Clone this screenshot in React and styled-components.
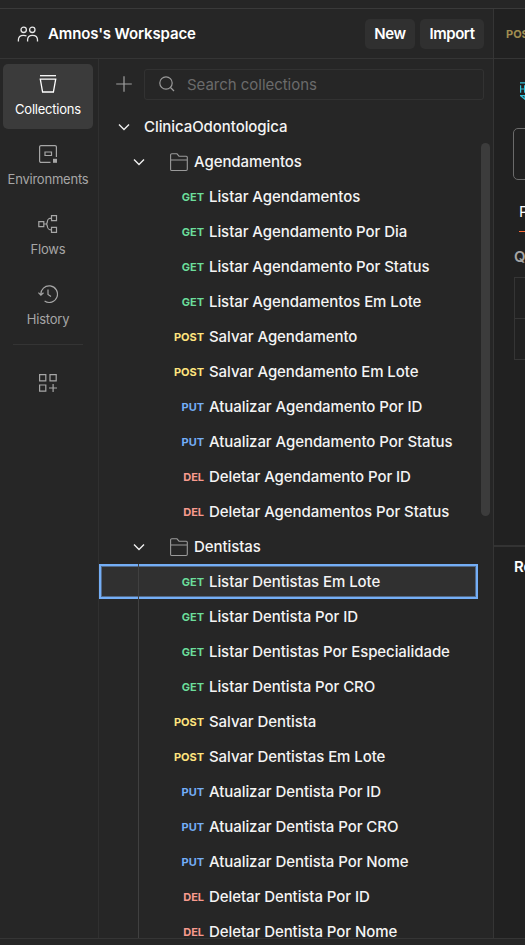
import React from "react";
import styled, { createGlobalStyle } from "styled-components";

const GlobalStyle = createGlobalStyle`
  *, *::before, *::after { box-sizing: border-box; }
  body { margin: 0; background: #262626; overflow: hidden; }
`;

const Shell = styled.div`
  width: 525px;
  height: 945px;
  display: flex;
  flex-direction: column;
  overflow: hidden;
  background: #262626;
  color: #fff;
  font-family: Inter, "Liberation Sans", sans-serif;
  font-size: 15px;
  white-space: nowrap;
`;
const TopStrip = styled.div`
  height: 9px;
  flex: none;
  border-bottom: 1px solid #3a3a3a;
`;
const Main = styled.div`
  flex: 1;
  min-height: 0;
  display: grid;
  grid-template-columns: 494px 1fr;
`;
const StatusBar = styled.div`
  height: 7px;
  flex: none;
  border-top: 1px solid #353535;
`;
const Workspace = styled.section`
  display: flex;
  flex-direction: column;
  min-height: 0;
  border-right: 1px solid #353535;
`;
const Header = styled.header`
  height: 50px;
  flex: none;
  display: flex;
  align-items: center;
  gap: 5px;
  padding: 0 9px 0 17px;
  border-bottom: 1px solid #353535;
`;
const Title = styled.h1`
  flex: 1;
  margin: 0 0 0 4px;
  font-size: 15px;
  line-height: 20px;
  font-weight: 600;
  letter-spacing: -0.14px;
`;
const HeaderButton = styled.button`
  width: ${(p) => p.$width}px;
  height: 30px;
  padding: 0;
  border: 0;
  border-radius: 5px;
  background: #303030;
  color: #fff;
  font: 600 15px Inter, sans-serif;
  letter-spacing: -0.45px;
`;
const Body = styled.div`
  flex: 1;
  min-height: 0;
  display: flex;
`;
const Rail = styled.nav`
  width: 99px;
  flex: none;
  display: flex;
  flex-direction: column;
  align-items: center;
  gap: 5px;
  padding: 5px 2px 0 0;
  border-right: 1px solid #303030;
`;
const RailItem = styled.div`
  width: 90px;
  height: 65px;
  display: flex;
  flex-direction: column;
  align-items: center;
  padding-top: 10px;
  gap: 5px;
  border-radius: 5px;
  background: ${(p) => (p.$active ? "#3b3b3b" : "transparent")};
  color: ${(p) => (p.$active ? "#fff" : "#a6a6a6")};
  font-size: 13px;
  line-height: 20px;
  letter-spacing: -0.22px;
`;
const RailDivider = styled.div`
  width: 70px;
  height: 1px;
  flex: none;
  background: #343434;
`;
const RailExtra = styled.div`
  height: 40px;
  margin-top: 13px;
  display: grid;
  place-items: center;
  color: #a6a6a6;
`;
const Explorer = styled.div`
  flex: 1;
  min-width: 0;
  display: flex;
  flex-direction: column;
`;
const Tools = styled.div`
  height: 50px;
  flex: none;
  display: flex;
  align-items: center;
  gap: 10px;
  padding: 0 9px 0 15px;
`;
const Search = styled.div`
  flex: 1;
  height: 31px;
  display: flex;
  align-items: center;
  gap: 10px;
  padding-left: 12px;
  border: 1px solid #323232;
  border-radius: 3px;
  color: #6b6b6b;
  letter-spacing: -0.03px;
`;
const TreeArea = styled.div`
  flex: 1;
  min-height: 0;
  display: grid;
  grid-template-columns: 379px 1fr;
  overflow: hidden;
`;
const Tree = styled.div`
  min-height: 0;
`;
const Row = styled.div`
  height: 35px;
  display: flex;
  align-items: center;
  color: #f4f4f4;
  font-weight: 450;
  letter-spacing: -0.07px;
  line-height: 20px;
  padding-left: ${(p) => p.$indent || 0}px;
`;
const Spacer = styled.span`
  width: ${(p) => p.$width}px;
  flex: none;
`;
const Requests = styled.div`
  position: relative;
  &::before {
    content: "";
    display: ${(p) => (p.$guide ? "block" : "none")};
    position: absolute;
    left: 39px;
    top: 0;
    bottom: 0;
    width: 1px;
    background: #404040;
    z-index: 1;
  }
`;
const RequestRow = styled(Row)`
  gap: 5px;
  background: ${(p) => (p.$selected ? "#303030" : "transparent")};
  box-shadow: ${(p) => (p.$selected ? "inset 0 0 0 2px #74aef6, inset 0 0 0 3px #526a8a" : "none")};
`;
const methodColors = { GET: "#6bdd9a", POST: "#ffe47e", PUT: "#74aef6", DEL: "#f79a8e" };
const Method = styled.span`
  width: 105px;
  flex: none;
  text-align: right;
  font-size: 11px;
  font-weight: 700;
  letter-spacing: -0.03px;
  color: ${(p) => methodColors[p.$method]};
`;
const ScrollTrack = styled.div`
  padding: 34px 0 0 3px;
`;
const ScrollThumb = styled.div`
  width: 9px;
  height: 373px;
  border-radius: 5px;
  background: #3c3c3c;
`;
const Editor = styled.section`
  min-width: 0;
  overflow: hidden;
  display: flex;
  flex-direction: column;
  background: #212121;
`;
const EditorTab = styled.div`
  height: 50px;
  flex: none;
  padding-left: 12px;
  border-bottom: 1px solid #353535;
  color: #a08d50;
  font-size: 11px;
  font-weight: 700;
  line-height: 50px;
`;
const Request = styled.div`
  height: 486px;
  flex: none;
  display: flex;
  flex-direction: column;
  align-items: flex-start;
`;
const ProtocolIcon = styled.div`
  margin: 23px 0 0 25px;
  height: 46px;
`;
const UrlBox = styled.div`
  width: 200px;
  height: 52px;
  margin-left: 19px;
  border: 1px solid #6b6b6b;
  border-radius: 5px;
`;
const ParamTab = styled.div`
  height: 52px;
  padding-top: 22px;
  margin-left: 25px;
  line-height: 20px;
  border-bottom: 1px solid #ff6c37;
`;
const QueryLabel = styled.div`
  margin: 15px 0 0 20px;
  height: 30px;
  line-height: 20px;
  color: #a6a6a6;
  font-weight: 600;
`;
const ParamTable = styled.div`
  width: 200px;
  height: 83px;
  margin-left: 20px;
  border: 1px solid #353535;
  display: grid;
  grid-template-rows: 41px 1fr;
`;
const ParamCell = styled.div`
  border-bottom: ${(p) => (p.$last ? "0" : "1px solid #353535")};
`;
const Response = styled.div`
  flex: 1;
  border-top: 2px solid #333;
  padding: 10px 0 0 20px;
  font-weight: 600;
  line-height: 20px;
`;

const Icon = ({ size = 20, children, sw = 1.2 }) => (
  <svg width={size} height={size} viewBox={`0 0 ${size} ${size}`} fill="none" stroke="currentColor" strokeWidth={sw}>
    {children}
  </svg>
);
const PeopleIcon = () => (
  <svg width="22" height="20" viewBox="0 0 22 20" fill="none" stroke="#e6e6e6" strokeWidth="1.3">
    <circle cx="6.7" cy="5.8" r="2.7" />
    <circle cx="15.3" cy="5.8" r="2.7" />
    <path d="M1.4 17.6v-1.8C1.4 13 3.5 11.3 6.5 11.3c1.2 0 2.2.2 3 .7M10.6 17.6v-1.8c0-2.8 2-4.5 4.9-4.5s5 1.7 5 4.5v1.8" />
  </svg>
);
const CollectionsIcon = () => (
  <Icon sw={1.3}><path d="M2 1.7h16" /><path d="M1.6 5.2h16.8M2.3 5.2l2.3 12.8h10.8l2.3-12.8" /></Icon>
);
const EnvironmentsIcon = () => (
  <Icon>
    <path d="M12.5 18.4H3a1.4 1.4 0 0 1-1.4-1.4V3A1.4 1.4 0 0 1 3 1.6h14A1.4 1.4 0 0 1 18.4 3v10" />
    <path d="M7 8h6.5v3.5H7z" />
    <path d="M15 14.8h4v4h-4z" fill="currentColor" stroke="none" />
  </Icon>
);
const FlowsIcon = () => (
  <Icon>
    <path d="M.8 7.6h5v5h-5zM13.5 1.6h5v5h-5zM13.5 13.4h5v5h-5zM5.8 10h3M13.5 4.1C9.7 4.1 9.6 6 9.3 8L8.6 10l.7 2c.3 2 .4 3.9 4.2 3.9" />
  </Icon>
);
const HistoryIcon = () => (
  <Icon>
    <path d="M2.9 10.9a8.3 8.3 0 1 1 3.7 6.2M.4 8.6l2.5 2.5L5.5 8.7M10 5.4v5l3 2" />
  </Icon>
);
const AppsIcon = () => (
  <Icon><path d="M1.6 1.6h6.2v6.2H1.6zM12 1.6h6.2v6.2H12zM1.6 12h6.2v6.2H1.6zM15.1 11v8M11 15h8" /></Icon>
);
const PlusIcon = () => (
  <svg width="20" height="20" viewBox="0 0 20 20" stroke="#a0a0a0" strokeWidth="1.2"><path d="M10 2.2v15.6M2.2 10h15.6" /></svg>
);
const SearchIcon = () => (
  <svg width="20" height="20" viewBox="0 0 20 20" fill="none" stroke="#9a9a9a" strokeWidth="1.2">
    <circle cx="9" cy="9" r="6.2" /><path d="M13.5 13.5 17 17" />
  </svg>
);
const Chevron = () => (
  <svg width="12" height="8" viewBox="0 0 12 8" fill="none" stroke="#f0f0f0" strokeWidth="1.4"><path d="M1 1.5 6 6.4 11 1.5" /></svg>
);
const FolderIcon = () => (
  <Icon sw={1.1}><path d="M1.6 17.5V3A1.2 1.2 0 0 1 2.8 1.8H8l2 2.4h7.3a1 1 0 0 1 1 1v12.1a1.2 1.2 0 0 1-1.2 1.2H2.7a1.1 1.1 0 0 1-1.1-1ZM1.6 8h16.7" stroke="#9a9a9a" /></Icon>
);
const HttpIcon = () => (
  <svg width="22" height="18" viewBox="0 0 22 18" fill="none" stroke="#35c4dc" strokeWidth="1.2">
    <path d="M1 .8h20M1.6 3.3v7.4M5.6 3.3v7.4M1.6 7h4M7.5 3.8h4M9.5 3.8v7M1 13.6h20M2 14l4 3.3V14" />
  </svg>
);

const agendamentos = [
  ["GET", "Listar Agendamentos"],
  ["GET", "Listar Agendamento Por Dia"],
  ["GET", "Listar Agendamento Por Status"],
  ["GET", "Listar Agendamentos Em Lote"],
  ["POST", "Salvar Agendamento"],
  ["POST", "Salvar Agendamento Em Lote"],
  ["PUT", "Atualizar Agendamento Por ID"],
  ["PUT", "Atualizar Agendamento Por Status"],
  ["DEL", "Deletar Agendamento Por ID"],
  ["DEL", "Deletar Agendamentos Por Status"],
];
const dentistas = [
  ["GET", "Listar Dentistas Em Lote"],
  ["GET", "Listar Dentista Por ID"],
  ["GET", "Listar Dentistas Por Especialidade"],
  ["GET", "Listar Dentista Por CRO"],
  ["POST", "Salvar Dentista"],
  ["POST", "Salvar Dentistas Em Lote"],
  ["PUT", "Atualizar Dentista Por ID"],
  ["PUT", "Atualizar Dentista Por CRO"],
  ["PUT", "Atualizar Dentista Por Nome"],
  ["DEL", "Deletar Dentista Por ID"],
  ["DEL", "Deletar Dentista Por Nome"],
];

const Folder = ({ name, items, selected, guide }) => (
  <>
    <Row $indent={34}>
      <Chevron />
      <Spacer $width={24} />
      <FolderIcon />
      <Spacer $width={5} />
      {name}
    </Row>
    <Requests $guide={guide}>
      {items.map(([method, label]) => (
        <RequestRow key={label} $selected={label === selected}>
          <Method $method={method}>{method}</Method>
          {label}
        </RequestRow>
      ))}
    </Requests>
  </>
);

export default function App() {
  return (
    <Shell>
      <GlobalStyle />
      <TopStrip />
      <Main>
        <Workspace>
          <Header>
            <PeopleIcon />
            <Title>Amnos's Workspace</Title>
            <HeaderButton $width={50}>New</HeaderButton>
            <HeaderButton $width={64}>Import</HeaderButton>
          </Header>
          <Body>
            <Rail>
              <RailItem $active><CollectionsIcon />Collections</RailItem>
              <RailItem><EnvironmentsIcon />Environments</RailItem>
              <RailItem><FlowsIcon />Flows</RailItem>
              <RailItem><HistoryIcon />History</RailItem>
              <RailDivider />
              <RailExtra><AppsIcon /></RailExtra>
            </Rail>
            <Explorer>
              <Tools>
                <PlusIcon />
                <Search><SearchIcon />Search collections</Search>
              </Tools>
              <TreeArea>
                <Tree>
                  <Row $indent={19}>
                    <Chevron />
                    <Spacer $width={14} />
                    ClinicaOdontologica
                  </Row>
                  <Folder name="Agendamentos" items={agendamentos} />
                  <Folder name="Dentistas" items={dentistas} selected="Listar Dentistas Em Lote" guide />
                </Tree>
                <ScrollTrack><ScrollThumb /></ScrollTrack>
              </TreeArea>
            </Explorer>
          </Body>
        </Workspace>
        <Editor>
          <EditorTab>POST</EditorTab>
          <Request>
            <ProtocolIcon><HttpIcon /></ProtocolIcon>
            <UrlBox />
            <ParamTab>Params</ParamTab>
            <QueryLabel>Query Params</QueryLabel>
            <ParamTable><ParamCell /><ParamCell $last /></ParamTable>
          </Request>
          <Response>Response</Response>
        </Editor>
      </Main>
      <StatusBar />
    </Shell>
  );
}
